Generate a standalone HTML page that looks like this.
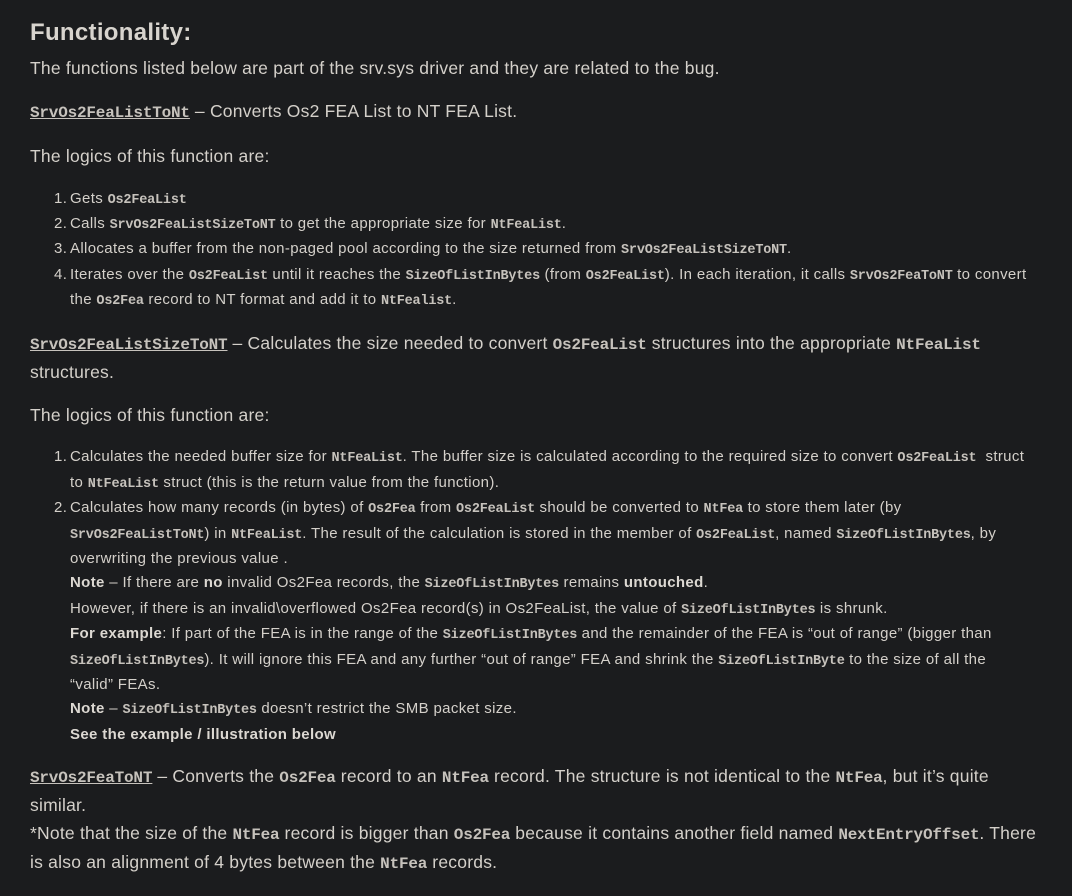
<!DOCTYPE html>
<html><head><meta charset="utf-8"><style>
body{margin:0;background:#1b1c1e;width:1072px;height:896px;overflow:hidden;position:relative;color:#d4d0ca;font-family:"Liberation Sans",sans-serif}
.l{position:absolute;white-space:nowrap;line-height:24px}
.p{font-size:17.5px;left:30px;letter-spacing:0.22px}
.s{font-size:15px;left:70px;letter-spacing:0.35px}
.n{position:absolute;left:-16px}
code{font-family:"Liberation Mono",monospace;font-weight:bold;color:#c6c2bc;letter-spacing:-0.2px}
.p code{font-size:16px}
.s code{font-size:13.5px}
u code{text-decoration:underline}
b{font-weight:bold;color:#dcd8d2}
h1{position:absolute;left:30px;top:16px;margin:0;font-size:24px;font-weight:bold;line-height:34px;color:#d8d4ce;letter-spacing:0.3px}
</style></head><body>
<h1>Functionality:</h1>
<div class="l p" style="top:56px">The functions listed below are part of the srv.sys driver and they are related to the bug.</div>
<div class="l p" style="top:99px"><u><code>SrvOs2FeaListToNt</code></u> – Converts Os2 FEA List to NT FEA List.</div>
<div class="l p" style="top:144px">The logics of this function are:</div>
<div class="l s" style="top:187px"><span class="n">1.</span>Gets <code>Os2FeaList</code></div>
<div class="l s" style="top:212px"><span class="n">2.</span>Calls <code>SrvOs2FeaListSizeToNT</code> to get the appropriate size for <code>NtFeaList</code>.</div>
<div class="l s" style="top:237px"><span class="n">3.</span>Allocates a buffer from the non-paged pool according to the size returned from <code>SrvOs2FeaListSizeToNT</code>.</div>
<div class="l s" style="top:263px"><span class="n">4.</span>Iterates over the <code>Os2FeaList</code> until it reaches the <code>SizeOfListInBytes</code> (from <code>Os2FeaList</code>). In each iteration, it calls <code>SrvOs2FeaToNT</code> to convert</div>
<div class="l s" style="top:288px">the <code>Os2Fea</code> record to NT format and add it to <code>NtFealist</code>.</div>
<div class="l p" style="top:331px"><u><code>SrvOs2FeaListSizeToNT</code></u> – Calculates the size needed to convert <code>Os2FeaList</code> structures into the appropriate <code>NtFeaList</code></div>
<div class="l p" style="top:360px">structures.</div>
<div class="l p" style="top:403px">The logics of this function are:</div>
<div class="l s" style="top:445px"><span class="n">1.</span>Calculates the needed buffer size for <code>NtFeaList</code>. The buffer size is calculated according to the required size to convert <code>Os2FeaList</code> &nbsp;struct</div>
<div class="l s" style="top:471px">to <code>NtFeaList</code> struct (this is the return value from the function).</div>
<div class="l s" style="top:496px"><span class="n">2.</span>Calculates how many records (in bytes) of <code>Os2Fea</code> from <code>Os2FeaList</code> should be converted to <code>NtFea</code> to store them later (by</div>
<div class="l s" style="top:522px"><code>SrvOs2FeaListToNt</code>) in <code>NtFeaList</code>. The result of the calculation is stored in the member of <code>Os2FeaList</code>, named <code>SizeOfListInBytes</code>, by</div>
<div class="l s" style="top:547px">overwriting the previous value .</div>
<div class="l s" style="top:571px"><b>Note</b> – If there are <b>no</b> invalid Os2Fea records, the <code>SizeOfListInBytes</code> remains <b>untouched</b>.</div>
<div class="l s" style="top:597px">However, if there is an invalid\overflowed Os2Fea record(s) in Os2FeaList, the value of <code>SizeOfListInBytes</code> is shrunk.</div>
<div class="l s" style="top:622px"><b>For example</b>: If part of the FEA is in the range of the <code>SizeOfListInBytes</code> and the remainder of the FEA is “out of range” (bigger than</div>
<div class="l s" style="top:648px"><code>SizeOfListInBytes</code>). It will ignore this FEA and any further “out of range” FEA and shrink the <code>SizeOfListInByte</code> to the size of all the</div>
<div class="l s" style="top:673px">“valid” FEAs.</div>
<div class="l s" style="top:697px"><b>Note</b> – <code>SizeOfListInBytes</code> doesn’t restrict the SMB packet size.</div>
<div class="l s" style="top:723px"><b>See the example / illustration below</b></div>
<div class="l p" style="top:764px"><u><code>SrvOs2FeaToNT</code></u> – Converts the <code>Os2Fea</code> record to an <code>NtFea</code> record. The structure is not identical to the <code>NtFea</code>, but it’s quite</div>
<div class="l p" style="top:793px">similar.</div>
<div class="l p" style="top:821px">*Note that the size of the <code>NtFea</code> record is bigger than <code>Os2Fea</code> because it contains another field named <code>NextEntryOffset</code>. There</div>
<div class="l p" style="top:850px">is also an alignment of 4 bytes between the <code>NtFea</code> records.</div>
</body></html>
